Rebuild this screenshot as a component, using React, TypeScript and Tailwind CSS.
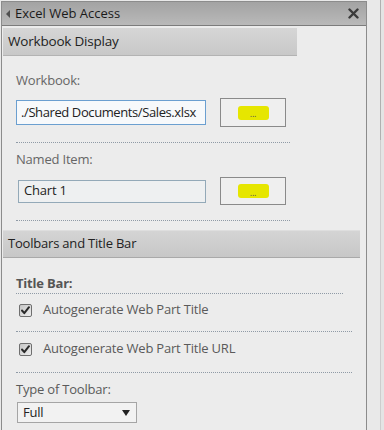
import React from "react";

function Dotted({ w }: { w: string }) {
  return <div className={`h-0 border-t border-dotted border-[#8f9aa6] ${w}`} />;
}

function Check() {
  return (
    <svg width="13" height="13" viewBox="0 0 13 13" className="shrink-0">
      <defs>
        <linearGradient id="cbg" x1="0" y1="0" x2="1" y2="1">
          <stop offset="0" stopColor="#c4c4c4" />
          <stop offset="1" stopColor="#efefef" />
        </linearGradient>
      </defs>
      <rect x="0.5" y="0.5" width="12" height="12" rx="1.5" fill="url(#cbg)" stroke="#6f6f6f" />
      <path d="M3 6.5 L5.3 9.2 L10 3.2" fill="none" stroke="#2a2a2a" strokeWidth="2" strokeLinecap="round" strokeLinejoin="round" />
    </svg>
  );
}

function DotsButton({ h }: { h: string }) {
  return (
    <div className={`w-[66px] ${h} border border-[#8a8a8a] bg-[#efefef] flex items-center justify-center shrink-0`}>
      <div className="w-[31px] h-[14px] bg-[#e6e600] rounded-[3px] flex items-center justify-center">
        <span className="text-[9px] leading-none text-[#555] mt-[2px]">...</span>
      </div>
    </div>
  );
}

export default function App() {
  return (
    <div className="w-[384px] h-[430px] bg-[#e9e9e9] overflow-hidden flex font-['Open_Sans',sans-serif] tracking-[-0.2px]">
      <div className="ml-[1px] mt-[1px] w-[366px] h-[440px] border border-[#8c8c8c] bg-[#ececec] flex flex-col shrink-0">
        {/* title bar */}
        <div className="h-[24px] shrink-0 bg-gradient-to-b from-[#a3a3a3] to-[#b9b9b9] border-b border-[#7c7c7c] flex items-center pl-[4px] pr-[7px]">
          <svg width="4" height="8" viewBox="0 0 4 8" className="mr-[5px]">
            <path d="M4 0 L0 4 L4 8 Z" fill="#505050" />
          </svg>
          <span className="text-[13px] text-[#1a1a1a] leading-none flex-1 tracking-normal">Excel Web Access</span>
          <svg width="11" height="11" viewBox="0 0 11 11">
            <path d="M1.5 1.5 L9.5 9.5 M9.5 1.5 L1.5 9.5" stroke="#3a3a3a" strokeWidth="2.4" strokeLinecap="round" />
          </svg>
        </div>

        {/* Workbook Display header */}
        <div className="mt-[2px] ml-[1px] w-[294px] h-[28px] shrink-0 bg-gradient-to-b from-[#d6d6d6] to-[#c8c8c8] border-b border-[#b3b3b3] flex items-center pl-[5px]">
          <span className="text-[13.5px] text-[#222]">Workbook Display</span>
        </div>

        <div className="pl-[14px] flex flex-col">
          <div className="mt-[15px] h-[18px] text-[13px] leading-[18px] text-[#666]">Workbook:</div>
          <div className="mt-[9px] flex items-center">
            <div className="w-[190px] h-[25px] border border-[#6b9fd0] bg-[#f7f9fb] flex items-center pl-[4px] overflow-hidden">
              <span className="text-[13px] tracking-[-0.4px] text-[#222] whitespace-nowrap">./Shared Documents/Sales.xlsx</span>
            </div>
            <div className="ml-[14px]">
              <DotsButton h="h-[29px]" />
            </div>
          </div>
          <div className="mt-[15px]">
            <Dotted w="w-[274px]" />
          </div>
          <div className="mt-[7px] h-[18px] text-[13px] leading-[18px] text-[#666]">Named Item:</div>
          <div className="mt-[9px] flex items-center">
            <div className="ml-[2px] w-[188px] h-[23px] border border-[#93a9b8] bg-[#eef0f1] flex items-center pl-[5px]">
              <span className="text-[13px] text-[#222]">Chart 1</span>
            </div>
            <div className="ml-[14px]">
              <DotsButton h="h-[28px]" />
            </div>
          </div>
          <div className="mt-[15px]">
            <Dotted w="w-[274px]" />
          </div>
        </div>

        {/* Toolbars header */}
        <div className="mt-[9px] ml-[1px] w-[357px] h-[28px] shrink-0 bg-gradient-to-b from-[#d4d4d4] to-[#c7c7c7] border-t border-[#dedede] border-b border-b-[#a9a9a9] flex items-center pl-[5px]">
          <span className="text-[13px] text-[#222]">Toolbars and Title Bar</span>
        </div>

        <div className="pl-[14px] flex flex-col">
          <div className="mt-[16px] h-[18px] text-[13px] leading-[18px] font-bold text-[#555]">Title Bar:</div>
          <div className="mt-[1px]">
            <Dotted w="w-[327px]" />
          </div>
          <div className="mt-[7px] h-[18px] flex items-center pl-[3px]">
            <Check />
            <span className="ml-[11px] text-[13px] text-[#5a5a5a]">Autogenerate Web Part Title</span>
          </div>
          <div className="mt-[12px]">
            <Dotted w="w-[336px]" />
          </div>
          <div className="mt-[8px] h-[18px] flex items-center pl-[3px]">
            <Check />
            <span className="ml-[11px] text-[13px] text-[#5a5a5a]">Autogenerate Web Part Title URL</span>
          </div>
          <div className="mt-[14px]">
            <Dotted w="w-[336px]" />
          </div>
          <div className="mt-[7px] h-[18px] text-[13px] leading-[18px] text-[#5a5a5a]">Type of Toolbar:</div>
          <div className="mt-[4px] ml-[1px] w-[120px] h-[21px] border border-[#a5a5a5] bg-[#f2f2f2] flex items-center pl-[5px] pr-[6px]">
            <span className="text-[13px] text-[#222] flex-1">Full</span>
            <svg width="8" height="6" viewBox="0 0 8 6">
              <path d="M0 0 L8 0 L4 6 Z" fill="#222" />
            </svg>
          </div>
        </div>
      </div>
      <div className="flex-1 flex">
        <div className="w-[13px] h-full" />
        <div className="w-[1px] h-full bg-[#cdcdcd] flex flex-col">
          <div className="h-[140px] bg-[#b0b0b0]" />
        </div>
        <div className="flex-1 bg-[#e4e4e4]" />
      </div>
    </div>
  );
}
